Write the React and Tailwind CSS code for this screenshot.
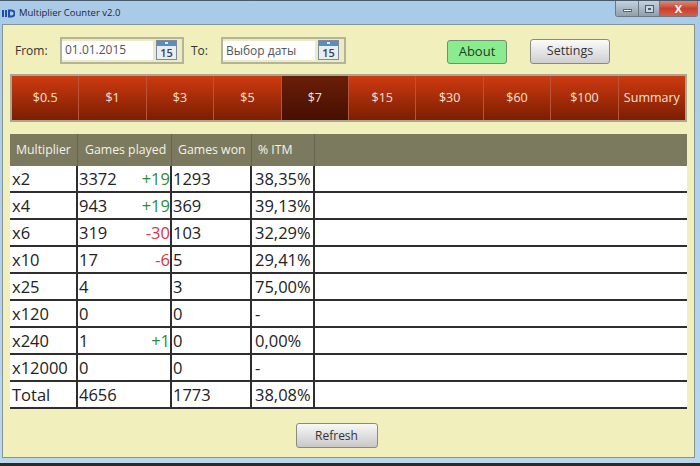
const TABS = ["$0.5", "$1", "$3", "$5", "$7", "$15", "$30", "$60", "$100", "Summary"];

const ROWS = [
  { m: "x2", played: "3372", delta: "+19", won: "1293", itm: "38,35%" },
  { m: "x4", played: "943", delta: "+19", won: "369", itm: "39,13%" },
  { m: "x6", played: "319", delta: "-30", won: "103", itm: "32,29%" },
  { m: "x10", played: "17", delta: "-6", won: "5", itm: "29,41%" },
  { m: "x25", played: "4", delta: "", won: "3", itm: "75,00%" },
  { m: "x120", played: "0", delta: "", won: "0", itm: "-" },
  { m: "x240", played: "1", delta: "+1", won: "0", itm: "0,00%" },
  { m: "x12000", played: "0", delta: "", won: "0", itm: "-" },
  { m: "Total", played: "4656", delta: "", won: "1773", itm: "38,08%" },
];

const COLS = "grid grid-cols-[68px_94px_80px_63px_1fr]";

function CalendarIcon() {
  return (
    <svg width="21" height="20" viewBox="0 0 21 20" className="shrink-0">
      <rect x="0.5" y="0.5" width="20" height="19" fill="#e8edf3" stroke="#7d8a99" />
      <rect x="1" y="1" width="19" height="5" fill="#5b8cc0" />
      <rect x="9" y="2" width="3" height="2" fill="#e6f0fa" />
      <text x="10.5" y="17" textAnchor="middle" fontSize="11" fontWeight="600" fill="#39424d" fontFamily="'Open Sans', sans-serif">15</text>
    </svg>
  );
}

function DateField({ value, width, inputWidth, textClass }) {
  return (
    <div className={`${width} h-[27px] mt-[1px] flex items-center justify-between border-2 border-[#b4b49b] bg-[#ecebc4] pr-[5px]`}>
      <div className={`${inputWidth} h-[19px] flex items-center bg-white pl-[3px]`}>
        <span className={`text-[12px] text-[#555] ${textClass}`}>{value}</span>
      </div>
      <CalendarIcon />
    </div>
  );
}

export default function App() {
  return (
    <div className="w-[700px] h-[466px] overflow-hidden flex flex-col bg-[#2b2a25] font-['Open_Sans',sans-serif]">
      <div className="h-[463px] flex flex-col bg-gradient-to-b from-[#a9cbe8] to-[#bcd6ee] pl-[2px] pr-[5px] pb-[5px] border-t border-[#4a5a68]">
        {/* Title bar */}
        <div className="h-[23px] shrink-0 flex items-center justify-between">
          <div className="flex items-center gap-[4px] pt-[1px]">
            <svg width="13" height="9" viewBox="0 0 13 9">
              <rect x="0" y="1" width="2" height="7" fill="#1f4fa8" />
              <rect x="3" y="1" width="2" height="7" fill="#1f4fa8" />
              <path d="M7 1.5h2.5a3 3 0 0 1 0 6h-2.5z" fill="none" stroke="#1f4fa8" strokeWidth="2" />
            </svg>
            <span className="text-[9.5px] text-[#1c2733]">Multiplier Counter v2.0</span>
          </div>
          <div className="flex self-start h-[16px] mr-[-3px] border border-t-0 border-[#6b7885] rounded-b-[3px] overflow-hidden">
            <div className="w-[23px] flex items-center justify-center bg-gradient-to-b from-[#c4d3e0] to-[#8f9fae] border-r border-[#6b7885]">
              <div className="w-[9px] h-[3px] mt-[4px] bg-white border border-[#5b6874]" />
            </div>
            <div className="w-[21px] flex items-center justify-center bg-gradient-to-b from-[#c4d3e0] to-[#8f9fae] border-r border-[#6b7885]">
              <div className="w-[9px] h-[8px] bg-[#c9d6e0] border border-[#4f5c68] flex items-center justify-center">
                <div className="w-[3px] h-[2px] border border-[#4f5c68]" />
              </div>
            </div>
            <div className="w-[37px] flex items-center justify-center bg-gradient-to-b from-[#d98a7c] via-[#c9402c] to-[#d0604c]">
              <span className="text-[11px] leading-none font-bold text-white">X</span>
            </div>
          </div>
        </div>

        {/* Client area */}
        <div className="flex-1 flex flex-col bg-[#f1efbb] border border-[#87938f] pl-[7px] pr-[7px]">
          <div className="h-[49px] shrink-0 flex items-center">
            <span className="ml-[5px] mt-[3px] w-[45px] text-[12px] text-[#333]">From:</span>
            <DateField value="01.01.2015" width="w-[124px]" inputWidth="w-[91px]" textClass="" />
            <span className="ml-[7px] mt-[3px] w-[30px] text-[12px] text-[#333]">To:</span>
            <DateField value="Выбор даты" width="w-[125px]" inputWidth="w-[92px]" textClass="mt-[2px]" />
            <button className="ml-[101px] mt-[4px] w-[60px] h-[24px] rounded-[3px] bg-[#8aec8e] border border-[#6f8f72] text-[13px] text-[#1f3d22]">About</button>
            <button className="ml-[23px] mt-[3px] w-[80px] h-[25px] pt-[1px] rounded-[3px] bg-gradient-to-b from-[#fbfbfb] to-[#cfcfcf] border border-[#8a8a80] text-[12.5px] text-[#333]">Settings</button>
          </div>

          {/* Stake tabs */}
          <div className="h-[48px] shrink-0 flex border-2 border-[#a8a892]">
            {TABS.map((t) => (
              <div
                key={t}
                className={`flex-1 flex items-center justify-center pt-[1px] text-[12.5px] text-[#f3e4d8] border-r border-[#b9543a] last:border-r-0 ${
                  t === "$7" ? "bg-gradient-to-b from-[#6b1e08] to-[#461003]" : "bg-gradient-to-b from-[#cf3b10] to-[#7c1e04]"
                }`}
              >
                {t}
              </div>
            ))}
          </div>

          {/* Table */}
          <div className="mt-[12px] bg-white text-[#222]">
            <div className={`${COLS} h-[32px] bg-[#7c7a5e] text-[12.3px] text-[#f2f2e8]`}>
              <div className="flex items-center pl-[6px] border-r border-[#66644c]">Multiplier</div>
              <div className="flex items-center pl-[7px] border-r border-[#66644c]">Games played</div>
              <div className="flex items-center pl-[6px] border-r border-[#66644c]">Games won</div>
              <div className="flex items-center pl-[6px] border-r border-[#66644c]">% ITM</div>
              <div />
            </div>
            {ROWS.map((r) => (
              <div key={r.m} className={`${COLS} h-[27px] text-[16.5px] leading-none border-b-2 border-[#2e2e2e]`}>
                <div className="flex items-center pl-[2px] pt-[2px] border-r-2 border-[#2e2e2e]">{r.m}</div>
                <div className="flex items-center justify-between pl-[1px] pt-[2px] border-r-2 border-[#2e2e2e]">
                  <span>{r.played}</span>
                  <span className={r.delta.startsWith("+") ? "text-[#2e8b3a]" : "text-[#e0323c]"}>{r.delta}</span>
                </div>
                <div className="flex items-center pl-[1px] pt-[2px] border-r-2 border-[#2e2e2e]">{r.won}</div>
                <div className="flex items-center pl-[3px] pt-[2px] border-r-2 border-[#2e2e2e]">{r.itm}</div>
                <div />
              </div>
            ))}
          </div>

          <div className="flex-1 flex items-center justify-center pr-[24px] pt-[5px]">
            <button className="w-[82px] h-[25px] rounded-[3px] bg-gradient-to-b from-[#f8f8f8] to-[#c8c8c8] border border-[#8a8a80] text-[12px] text-[#333]">Refresh</button>
          </div>
        </div>
      </div>
    </div>
  );
}
